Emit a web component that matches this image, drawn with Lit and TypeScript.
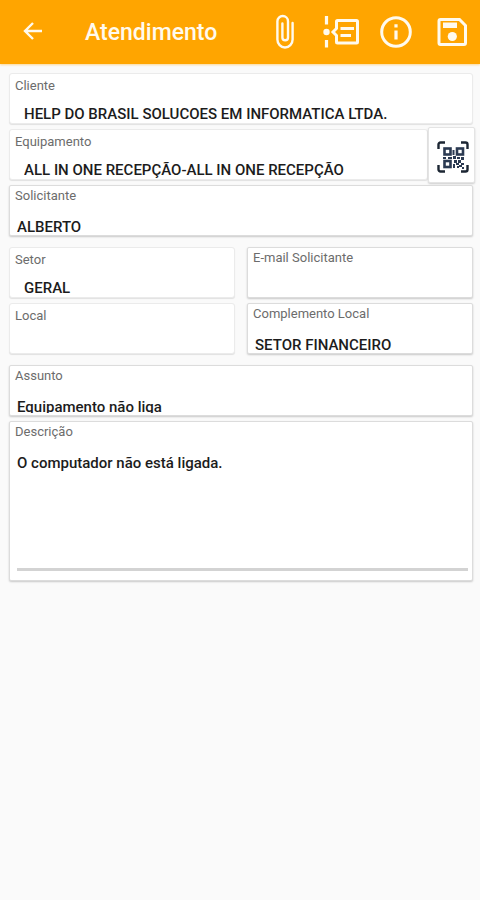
import { LitElement, html, css, svg } from "lit";
import { customElement, property } from "lit/decorators.js";

const back = svg`<path d="M30 20H13M21 12L13 20L21 28" fill="none" stroke="currentColor" stroke-width="2.4"/>`;

const clip = svg`<path d="M28.6 11V27.5a7.6 8 0 0 1-15.2 0V9.3a5.3 5.3 0 0 1 10.6 0V25.5a2.8 2.8 0 0 1-5.6 0V11.5" fill="none" stroke="currentColor" stroke-width="2.4" stroke-linecap="round"/>`;

const timeline = svg`
  <path d="M6.5 4V12.5M6.5 28V35.5" stroke="currentColor" stroke-width="3.2" fill="none"/>
  <circle cx="6.5" cy="20" r="3.2" fill="currentColor"/>
  <path d="M16.5 9.5a1 1 0 0 1 1-1H36.5a1 1 0 0 1 1 1V30a1 1 0 0 1-1 1H17.5a1 1 0 0 1-1-1V23.5L13 20L16.5 16.5Z" fill="none" stroke="currentColor" stroke-width="3"/>
  <path d="M20.5 16.5H34M20.5 23.5H31" stroke="currentColor" stroke-width="3" fill="none"/>`;

const info = svg`
  <circle cx="20" cy="20" r="14.3" fill="none" stroke="currentColor" stroke-width="3"/>
  <path d="M20 18.5V27.5M20 12.3V15.5" stroke="currentColor" stroke-width="3.2" fill="none"/>`;

const save = svg`
  <path d="M8.5 7.5H27.5L33.5 13.5V31a1.5 1.5 0 0 1-1.5 1.5H8.5A1.5 1.5 0 0 1 7 31V9a1.5 1.5 0 0 1 1.5-1.5Z" fill="none" stroke="currentColor" stroke-width="3"/>
  <rect x="11" y="10.5" width="14" height="5.5" fill="currentColor"/>
  <circle cx="20.3" cy="24.5" r="4.6" fill="currentColor"/>`;

const qr = svg`
  <path d="M1.5 8V3.5a2 2 0 0 1 2-2H8M24 1.5h4.5a2 2 0 0 1 2 2V8M30.5 24v4.5a2 2 0 0 1-2 2H24M8 30.5H3.5a2 2 0 0 1-2-2V24" fill="none" stroke="#1c2633" stroke-width="2.4"/>
  <g fill="none" stroke="#2b3a52" stroke-width="2.6">
    <rect x="7.5" y="7.5" width="6" height="6"/>
    <rect x="20" y="7.5" width="6" height="6"/>
    <rect x="7.5" y="20" width="6" height="6"/>
  </g>
  <path fill="#2b3a52" d="M15.5 9h2v5h-2zM6 16h3v2H6zM11 16h4v2h-4zM16 15h3v3h-3zM20 16h3v2h-3zM24 16h3v3h-3zM17 19h3v3h-3zM21 19h3v3h-3zM16 23h2v4h-2zM19 22h3v2h-3zM24 22h3v2h-3zM20 25h2v2h-2zM22 24h3v2h-3zM25 26h2v2h-2z"/>`;

@customElement("form-field")
export class FormField extends LitElement {
  @property() label = "";
  @property() value = "";
  @property({ type: Boolean, reflect: true }) picker = false;
  @property({ type: Boolean, reflect: true }) multiline = false;

  static styles = css`
    :host {
      display: block;
      min-width: 0;
    }
    .card {
      box-sizing: border-box;
      display: flex;
      flex-direction: column;
      min-height: 51px;
      padding: 2px 4px;
      background: #fff;
      border: 1px solid #dcdcdc;
      border-radius: 2px;
      box-shadow: 0 1px 2px rgba(0, 0, 0, 0.2);
    }
    :host([picker]) .card {
      padding: 4px 4px 0;
      border-color: #ebebeb;
      border-radius: 3px;
      box-shadow: 0 1px 1px rgba(0, 0, 0, 0.1);
    }
    label {
      padding-left: 1px;
      font-size: 13px;
      line-height: 16px;
      color: #6c6c6c;
    }
    .slot {
      height: 16px;
      margin-top: 13px;
      padding-left: 3px;
      overflow: hidden;
    }
    :host([picker]) .slot {
      height: 19px;
      margin-top: 10px;
      padding-left: 10px;
    }
    input,
    textarea {
      box-sizing: border-box;
      display: block;
      width: 100%;
      margin: 0;
      padding: 0;
      border: 0;
      outline: 0;
      background: none;
      font: 500 15px/20px Roboto, sans-serif;
      color: #1c1c1c;
    }
    input {
      height: 20px;
    }
    textarea {
      width: auto;
      height: 118px;
      margin: 13px 0 7px 3px;
      border-bottom: 3px solid #d3d3d3;
      resize: none;
    }
  `;

  render() {
    return html`<div class="card">
      <label for="control">${this.label}</label>
      ${this.multiline
        ? html`<textarea id="control" .value=${this.value}></textarea>`
        : html`<div class="slot">
            <input id="control" type="text" .value=${this.value} ?readonly=${this.picker} />
          </div>`}
    </div>`;
  }
}

@customElement("app-root")
export class AppRoot extends LitElement {
  static styles = css`
    :host {
      display: block;
      min-height: 100vh;
      background: #fafafa;
      font-family: Roboto, sans-serif;
    }
    header {
      display: flex;
      align-items: center;
      height: 64px;
      background: #ffa500;
      color: #fffaee;
      box-shadow: 0 1px 2px rgba(255, 165, 0, 0.4);
    }
    h1 {
      flex: 1;
      margin: 0;
      padding: 2px 0 0 21px;
      font-size: 23px;
      line-height: 32px;
      font-weight: 500;
    }
    button {
      display: flex;
      align-items: center;
      justify-content: center;
      margin: 0;
      padding: 0;
      border: 0;
      background: none;
      color: inherit;
    }
    .action {
      width: 56px;
      height: 64px;
    }
    .back {
      width: 64px;
      height: 62px;
      align-self: flex-start;
    }
    svg {
      display: block;
    }
    form {
      display: flex;
      flex-direction: column;
      gap: 11px;
      padding: 9px 7px 16px 9px;
    }
    .group {
      display: flex;
      flex-direction: column;
      gap: 5px;
    }
    .columns {
      display: grid;
      grid-template-columns: 1fr 1fr;
      gap: 5px 12px;
    }
    .with-scan {
      display: grid;
      grid-template-columns: 1fr 45px;
    }
    .scan {
      margin: -2px -2px -3px 0;
      background: #fff;
      border: 1px solid #e4e4e4;
      border-radius: 2px;
      box-shadow: 0 1px 2px rgba(0, 0, 0, 0.18);
    }
    .scan svg {
      margin: 4px 0 0 2px;
    }
  `;

  private icon(shape: unknown) {
    return html`<svg width="40" height="40" viewBox="0 0 40 40" aria-hidden="true">${shape}</svg>`;
  }

  render() {
    return html`
      <header>
        <button class="back" aria-label="Voltar">${this.icon(back)}</button>
        <h1>Atendimento</h1>
        <button class="action" aria-label="Anexos">${this.icon(clip)}</button>
        <button class="action" aria-label="Andamento">${this.icon(timeline)}</button>
        <button class="action" aria-label="Informações">${this.icon(info)}</button>
        <button class="action" aria-label="Salvar">${this.icon(save)}</button>
      </header>
      <form>
        <div class="group">
          <form-field picker label="Cliente" value="HELP DO BRASIL SOLUCOES EM INFORMATICA LTDA."></form-field>
          <div class="with-scan">
            <form-field picker label="Equipamento" value="ALL IN ONE RECEPÇÃO-ALL IN ONE RECEPÇÃO"></form-field>
            <button class="scan" type="button" aria-label="Ler QR code">
              <svg width="32" height="32" viewBox="0 0 32 32" aria-hidden="true">${qr}</svg>
            </button>
          </div>
          <form-field label="Solicitante" value="ALBERTO"></form-field>
        </div>
        <div class="columns">
          <form-field picker label="Setor" value="GERAL"></form-field>
          <form-field label="E-mail Solicitante"></form-field>
          <form-field picker label="Local"></form-field>
          <form-field label="Complemento Local" value="SETOR FINANCEIRO"></form-field>
        </div>
        <div class="group">
          <form-field label="Assunto" value="Equipamento não liga"></form-field>
          <form-field multiline label="Descrição" value="O computador não está ligada."></form-field>
        </div>
      </form>
    `;
  }
}
